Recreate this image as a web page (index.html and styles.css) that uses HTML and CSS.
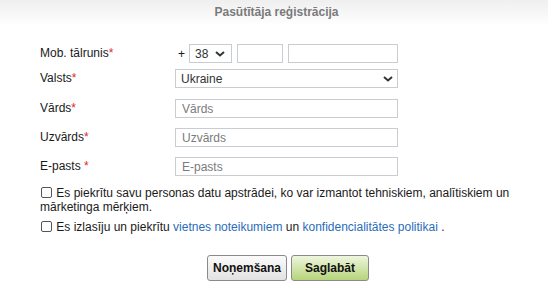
FILE: index.html
```html
<!DOCTYPE html>
<html lang="lv">
<head>
<meta charset="utf-8">
<title>Pasūtītāja reģistrācija</title>
<link rel="stylesheet" href="styles.css">
</head>
<body>
<div class="header"><h1 class="title">Pasūtītāja reģistrācija</h1></div>
<form class="form">
  <div class="grid">
    <label class="lbl">Mob. tālrunis<span class="req">*</span></label>
    <div class="phone">
      <span class="plus">+</span>
      <span class="selwrap code">
        <select class="sel"><option>38</option></select>
        <svg class="chev" viewBox="0 0 10 6" width="10" height="6"><path d="M1 1l4 3.5L9 1" fill="none" stroke="#333" stroke-width="2"/></svg>
      </span>
      <input class="inp op" type="text">
      <input class="inp num" type="text">
    </div>

    <label class="lbl">Valsts<span class="req">*</span></label>
    <span class="selwrap full">
      <select class="sel"><option>Ukraine</option></select>
      <svg class="chev" viewBox="0 0 10 6" width="10" height="6"><path d="M1 1l4 3.5L9 1" fill="none" stroke="#333" stroke-width="2"/></svg>
    </span>

    <label class="lbl">Vārds<span class="req">*</span></label>
    <input class="inp full" type="text" placeholder="Vārds">

    <label class="lbl">Uzvārds<span class="req">*</span></label>
    <input class="inp full" type="text" placeholder="Uzvārds">

    <label class="lbl">E-pasts <span class="req">*</span></label>
    <input class="inp full" type="text" placeholder="E-pasts">
  </div>

  <div class="checks">
    <label class="chk"><input type="checkbox" class="box"> Es piekrītu savu personas datu apstrādei, ko var izmantot tehniskiem, analītiskiem un mārketinga mērķiem.</label>
    <label class="chk"><input type="checkbox" class="box"> Es izlasīju un piekrītu <a class="lnk" href="#">vietnes noteikumiem</a> un <a class="lnk" href="#">konfidencialitātes politikai</a> .</label>
  </div>

  <div class="buttons">
    <button type="button" class="btn cancel">Noņemšana</button>
    <button type="button" class="btn save">Saglabāt</button>
  </div>
</form>
</body>
</html>
```
FILE: styles.css
```css
* { box-sizing: border-box; }
body {
  margin: 0;
  background: #fff;
  font-family: Arial, "Liberation Sans", sans-serif;
  font-size: 12px;
  color: #1a1a1a;
}
.header {
  height: 26px;
  background: linear-gradient(#efefef, #ffffff);
  display: flex;
  justify-content: center;
  padding-top: 5px;
}
.title {
  margin: 0;
  font-size: 12px;
  font-weight: bold;
  color: #7a7a7a;
  padding-left: 5px;
}
.form { padding: 18px 0 0 40px; }
.grid {
  display: grid;
  grid-template-columns: 135px 223px;
  grid-template-rows: 15px 20px 19px 19px 19px;
  row-gap: 10px;
  align-items: start;
}
.lbl { line-height: 19px; }
.req { color: #e0262c; }
.phone { display: flex; align-items: center; gap: 5px; height: 19px; }
.plus { margin: 0 0 0 3px; }
.selwrap { position: relative; display: block; height: 19px; }
.selwrap.code { width: 45px; margin-left: -1px; }
.sel {
  -webkit-appearance: none;
  appearance: none;
  width: 100%;
  height: 19px;
  border: 1px solid #c9ccd0;
  background: #fff;
  font-family: Arial, "Liberation Sans", sans-serif;
  font-size: 12px;
  font-weight: normal;
  color: #333;
  padding: 0 0 0 5px;
  margin: 0;
  border-radius: 0;
}
.chev { position: absolute; right: 5px; top: 7px; }
.code .chev { right: 7px; }
.inp {
  height: 19px;
  border: 1px solid #c9ccd0;
  padding: 0 0 0 6px;
  margin: 0;
  font-family: Arial, "Liberation Sans", sans-serif;
  font-size: 12px;
  color: #333;
  background: #fff;
}
.inp::placeholder { color: #7b7b7b; }
.op { width: 46px; }
.num { width: 110px; }
.full { width: 223px; }
.checks { margin-top: 10px; width: 470px; }
.chk { display: block; line-height: 14px; margin-bottom: 6px; }
.chk:last-child { margin-bottom: 0; }
.box {
  -webkit-appearance: none;
  appearance: none;
  width: 11px;
  height: 11px;
  border: 1px solid #555;
  border-radius: 2px;
  margin: 0 1px 0 1px;
  vertical-align: -1px;
  background: #fff;
}
.lnk { color: #2a6db8; text-decoration: none; }
.buttons {
  display: flex;
  justify-content: center;
  gap: 4px;
  margin-top: 21px;
  padding-right: 12px;
}
.btn {
  height: 26px;
  border: 1px solid #8a8a8a;
  border-radius: 3px;
  font-family: Arial, "Liberation Sans", sans-serif;
  font-size: 12px;
  font-weight: bold;
  color: #111;
  padding: 0;
}
.cancel { width: 80px; background: linear-gradient(#fbfbfb, #e2e2e2); }
.save { width: 78px; background: linear-gradient(#eef6de, #b6d47b); }
```
